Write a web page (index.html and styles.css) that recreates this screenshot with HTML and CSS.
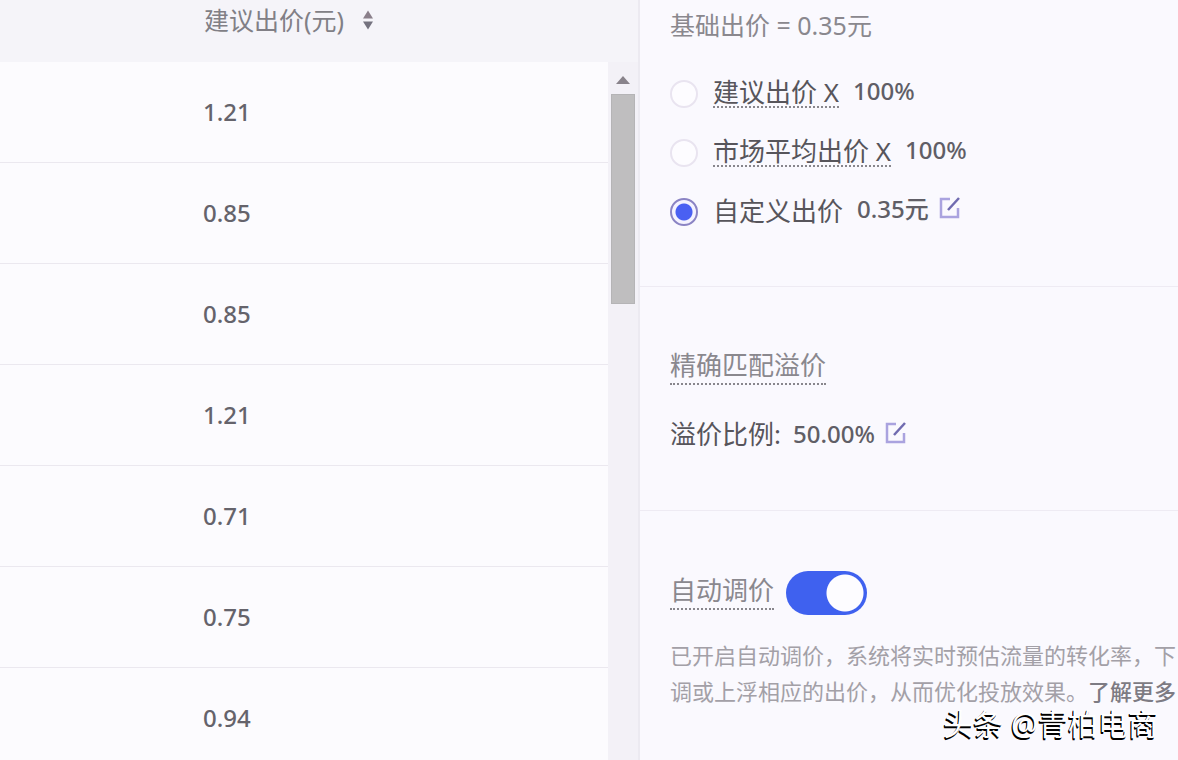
FILE: index.html
```html
<!DOCTYPE html>
<html lang="zh-CN">
<head>
<meta charset="utf-8">
<meta name="viewport" content="width=device-width, initial-scale=1">
<title>出价设置</title>
<link rel="stylesheet" href="styles.css">
</head>
<body>
<main class="page">
  <section class="prices">
    <div class="prices-body">
      <table class="price-table">
        <thead>
          <tr><th scope="col"><span class="heading">建议出价(元)
            <button class="sort" type="button" aria-label="排序"><svg width="12" height="20" viewBox="0 0 12 20"><path d="M6 0.500L11 8.500H1Z" fill="#8a7f8a"/><path d="M6 19.500L1 11.500H11Z" fill="#74727f"/></svg></button></span></th></tr>
        </thead>
        <tbody>
          <tr><td>1.21</td></tr>
          <tr><td>0.85</td></tr>
          <tr><td>0.85</td></tr>
          <tr><td>1.21</td></tr>
          <tr><td>0.71</td></tr>
          <tr><td>0.75</td></tr>
          <tr><td>0.94</td></tr>
        </tbody>
      </table>
    </div>
    <div class="scrollbar" aria-hidden="true">
      <svg class="scroll-arrow" width="14" height="8" viewBox="0 0 14 8"><path d="M7 0L14 8H0Z" fill="#89838b"/></svg>
      <div class="thumb"></div>
    </div>
  </section>

  <section class="settings">
    <div class="group base">
      <h2 class="title">基础出价 = 0.35元</h2>
      <div class="options">
        <div class="option">
          <input class="radio" type="radio" name="bid" id="bid-suggested">
          <label class="label dotted" for="bid-suggested">建议出价 X</label>
          <span class="value">100%</span>
        </div>
        <div class="option">
          <input class="radio" type="radio" name="bid" id="bid-market">
          <label class="label dotted" for="bid-market">市场平均出价 X</label>
          <span class="value">100%</span>
        </div>
        <div class="option">
          <input class="radio" type="radio" name="bid" id="bid-custom" checked>
          <label class="label" for="bid-custom">自定义出价</label>
          <span class="value">0.35元</span>
          <button class="edit" type="button" aria-label="修改出价"><svg width="22" height="22" viewBox="0 0 22 22" fill="none"><path d="M11 2H2V20H19V11" stroke="#aaa3df" stroke-width="2.500"/><path d="M9 13L20 1" stroke="#706bb0" stroke-width="2.500"/></svg></button>
        </div>
      </div>
    </div>

    <div class="group premium">
      <h2 class="title dotted">精确匹配溢价</h2>
      <div class="ratio">
        <span class="label">溢价比例:</span>
        <span class="value">50.00%</span>
        <button class="edit" type="button" aria-label="修改溢价比例"><svg width="22" height="22" viewBox="0 0 22 22" fill="none"><path d="M11 2H2V20H19V11" stroke="#aaa3df" stroke-width="2.500"/><path d="M9 13L20 1" stroke="#706bb0" stroke-width="2.500"/></svg></button>
      </div>
    </div>

    <div class="group auto">
      <div class="auto-head">
        <label class="title dotted" for="auto-price">自动调价</label>
        <input class="switch" type="checkbox" role="switch" id="auto-price" checked>
      </div>
      <p class="note">已开启自动调价，系统将实时预估流量的转化率，下调或上浮相应的出价，从而优化投放效果。<a class="more" href="#">了解更多</a></p>
    </div>
  </section>
  <div class="watermark">头条 @青柏电商</div>
</main>
</body>
</html>
```
FILE: styles.css
```css
* { box-sizing: border-box; }

body {
  margin: 0;
  background: #faf9fe;
  color: #55535b;
  font-family: "Noto Sans", "Noto Sans CJK SC", sans-serif;
  font-size: 24px;
  line-height: 36px;
}

button {
  display: flex;
  padding: 0;
  border: 0;
  background: none;
  cursor: pointer;
}

.page {
  position: relative;
  display: grid;
  grid-template-columns: 640fr 538fr;
  height: 100vh;
  overflow: hidden;
}

.prices {
  display: flex;
  min-width: 0;
  overflow: hidden;
  background: #f5f4f9;
  border-right: 2px solid #eceaf1;
}

.prices-body { flex: 1; }

.price-table {
  width: 100%;
  border-collapse: separate;
  border-spacing: 0;
}

.price-table th {
  height: 62px;
  padding: 2px 0 24px 204px;
  color: #817f86;
  font-size: 25px;
  font-weight: 400;
  text-align: left;
}

.heading {
  display: flex;
  align-items: center;
  gap: 18px;
}

.price-table td {
  height: 101px;
  padding: 0 0 0 203px;
  background: #fcfbfe;
  border-bottom: 1px solid #ebe8ef;
  font-weight: 500;
  color: #65636b;
}

.scrollbar {
  display: flex;
  flex-direction: column;
  align-items: center;
  gap: 10px;
  width: 30px;
  margin-top: 62px;
  padding-top: 14px;
  background: #f3f1f7;
}

.thumb {
  width: 24px;
  height: 210px;
  background: #bfbebf;
  border: 1px solid #b5b4b6;
}

.settings { min-width: 0; }

.group {
  padding-left: 30px;
  border-bottom: 1px solid #eeebf3;
}

.group:last-child { border-bottom: 0; }

.title {
  width: fit-content;
  margin: 0;
  color: #8a888e;
  font-size: 26px;
  font-weight: 400;
  line-height: 36px;
}

.dotted { border-bottom: 2px dotted #88868c; }

.base { padding-top: 7px; padding-bottom: 45px; }

.base .title { font-size: 25px; }

.options { padding-top: 21px; }

.option {
  display: flex;
  align-items: center;
  height: 59px;
}

.radio {
  width: 28px;
  height: 28px;
  margin: 0 15px 0 0;
  appearance: none;
  background: #fdfcff;
  border: 2px solid #e9e4f0;
  border-radius: 50%;
}

.radio:checked {
  background: radial-gradient(circle, #4a60f2 8px, #f4f2ff 9px);
  border-color: #8b84c4;
}

.label {
  color: #57555b;
  font-size: 26px;
  line-height: 28px;
}

.option .label { margin-bottom: 2px; }

.value {
  padding-bottom: 6px;
  margin-left: 14px;
  color: #605e66;
  font-weight: 500;
}

.edit { margin: 0 0 8px 10px; }

.premium { padding: 60px 0 58px 30px; }

.ratio {
  display: flex;
  align-items: center;
  padding-top: 31px;
}

.ratio .value { padding: 0; margin-left: 12px; }

.ratio .edit { margin: 0 0 2px 10px; }

.auto { padding-top: 60px; }

.auto-head {
  display: flex;
  align-items: center;
  gap: 12px;
}

.auto .title { margin-bottom: 4px; }

.switch {
  width: 81px;
  height: 44px;
  margin: 0;
  appearance: none;
  background: radial-gradient(circle at 59px 22px, #fdfcff 18px, #3f61ef 19px);
  border-radius: 22px;
}

.note {
  margin: 22px 0 0;
  color: #a3a0a7;
  font-size: 22px;
  line-height: 36px;
}

.more {
  color: #7d7b83;
  text-decoration: none;
  font-weight: 500;
}

.watermark {
  position: absolute;
  right: 20px;
  bottom: 20px;
  color: #fff;
  font-size: 30px;
  line-height: 32px;
  text-shadow: -1px 1px 0 #000, -1px 2px 0 #000;
}
```
